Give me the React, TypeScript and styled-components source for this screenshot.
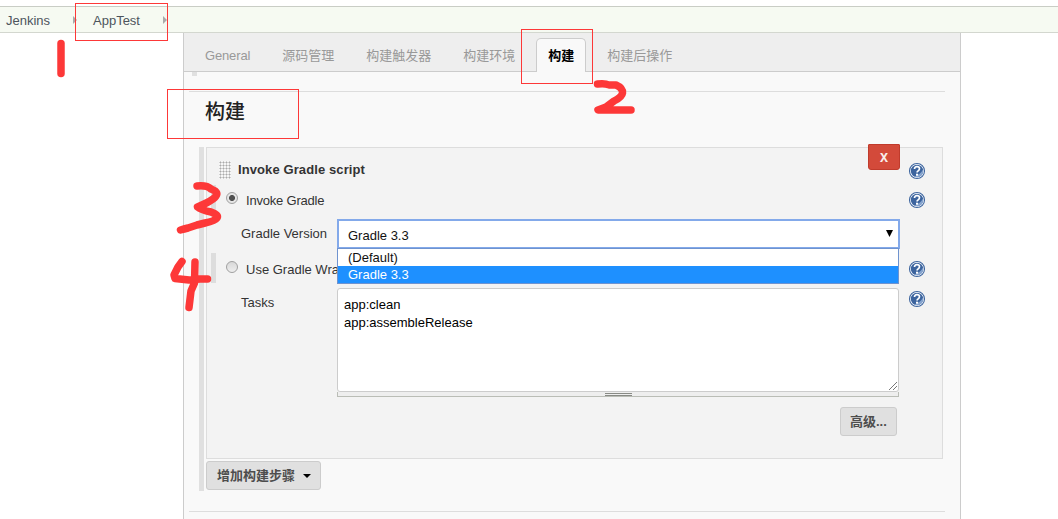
import React from 'react'
import styled, { createGlobalStyle } from 'styled-components'

const GlobalStyle = createGlobalStyle`
  * {
    box-sizing: border-box;
  }
  body {
    margin: 0;
    background: #fff;
    color: #333;
    font: 13px/18px 'Liberation Sans', 'Noto Sans CJK SC', sans-serif;
    overflow: hidden;
  }
`

const Page = styled.div`
  position: relative;
  width: 1058px;
  height: 519px;
  padding-top: 6px;
  overflow: hidden;
`

const Breadcrumbs = styled.nav`
  display: flex;
  align-items: center;
  height: 27px;
  padding-left: 6px;
  background: #f6faf2;
  border-top: 1px solid #c9cdc5;
  border-bottom: 1px solid #d3d7cf;
  color: #4d545d;
`

const Crumb = styled.span<{ $width: number }>`
  width: ${props => props.$width}px;
  padding-top: 2px;
`

const CrumbArrow = styled.span`
  width: 4px;
  height: 8px;
  margin: 1px 16px 0 0;
  background: #aaa;
  clip-path: polygon(0 0, 100% 50%, 0 100%);
`

const ConfigPanel = styled.main`
  width: 778px;
  height: 486px;
  margin-left: 183px;
  background: #f9f9f9;
  border: 1px solid #ccc;
  border-width: 0 1px;
`

const TabBar = styled.div`
  display: flex;
  align-items: flex-end;
  gap: 8px;
  height: 39px;
  padding-left: 9px;
  background: #eee;
  border-bottom: 1px solid #ccc;
`

const Tab = styled.div<{ $active?: boolean }>`
  height: 34px;
  margin-bottom: -1px;
  margin-left: ${props => props.$active ? 1 : 0}px;
  padding: 8px 11px 0;
  border: 1px solid ${props => props.$active ? '#ccc' : 'transparent'};
  border-bottom: 0;
  border-radius: 5px 5px 0 0;
  background: ${props => props.$active ? '#f9f9f9' : 'transparent'};
  color: ${props => props.$active ? '#000' : '#999'};
  font-weight: ${props => props.$active ? 'bold' : 'normal'};
  white-space: nowrap;

  &:first-child {
    letter-spacing: -0.15px;
  }
  &:last-child {
    margin-left: 1px;
  }
`

const ScrollHint = styled.div`
  width: 5px;
  height: 4px;
  margin-left: 8px;
  background: #e0e0e0;
`

const Divider = styled.div<{ $top: number }>`
  width: 756px;
  height: 1px;
  margin: ${props => props.$top}px 0 0 5px;
  background: #ddd;
`

const SectionTitle = styled.h2`
  height: 55px;
  margin: 0;
  padding: 6px 0 0 21px;
  color: #222;
  font-size: 20px;
  font-weight: 500;
  line-height: 28px;
`

const BuildSteps = styled.section`
  width: 744px;
  height: 344px;
  margin-left: 15px;
  padding-left: 2px;
  border-left: 5px solid #e0e0e0;
`

const StepCard = styled.div`
  width: 737px;
  height: 312px;
  background: #f3f3f3;
  border: 1px solid #ddd;
`

const StepHeader = styled.div`
  display: flex;
  height: 37px;
`

const DragHandle = styled.div`
  width: 12px;
  height: 18px;
  margin: 13px 7px 0 12px;
  background: radial-gradient(circle at 1.5px 1.5px, #aaa 0.6px, #fff 1.5px) 0 0 / 3px 3px;
`

const StepName = styled.strong`
  flex: none;
  width: 630px;
  padding-top: 13px;
  letter-spacing: 0.1px;
`

const DeleteButton = styled.button`
  flex: none;
  width: 32px;
  height: 26px;
  margin: -4px -1px 0 0;
  padding: 0;
  background: #d34a3a;
  border: 1px solid #c03b2c;
  border-radius: 1px 1px 3px 3px;
  color: #f8eeec;
  font: bold 12px 'Noto Sans', sans-serif;
`

const Row = styled.div<{ $height: number }>`
  display: flex;
  height: ${props => props.$height}px;
`

const RowMarker = styled.div<{ $height: number }>`
  flex: none;
  width: 5px;
  height: ${props => props.$height}px;
  margin: 0 10px 0 4px;
  background: #ddd;
`

const Radio = styled.span<{ $checked?: boolean }>`
  flex: none;
  width: 12px;
  height: 12px;
  margin: ${props => props.$checked ? 7 : 8}px 8px 0 0;
  border: 1px solid #a0a0a0;
  border-radius: 50%;
  background: ${props => props.$checked
    ? 'radial-gradient(circle, #505050 0 2.6px, #e6e6e6 3.4px)'
    : 'linear-gradient(#d8d8d8, #eee)'};
`

const RadioLabel = styled.span<{ $shift?: number; $spacing?: number }>`
  flex: none;
  width: 653px;
  padding-top: ${props => 7 + (props.$shift || 0)}px;
  letter-spacing: ${props => props.$spacing || 0}px;
`

const FieldLabel = styled.span`
  flex: none;
  width: 130px;
  padding: 6px 0 0 34px;
  white-space: nowrap;
`

const Select = styled.div`
  position: relative;
  display: flex;
  justify-content: space-between;
  width: 563px;
  height: 30px;
  padding: 6px 5px 0 9px;
  background: #fff;
  border: 2px solid #83a9ea;
  color: #111;
`

const SelectArrow = styled.span`
  width: 7px;
  height: 7px;
  margin: 3px 0 0;
  background: #000;
  clip-path: polygon(0 0, 100% 0, 50% 100%);
`

const OptionList = styled.div`
  position: absolute;
  z-index: 2;
  top: 27px;
  left: -2px;
  width: 562px;
  background: #fff;
  border: 1px solid #6f93cf;
`

const Option = styled.div<{ $selected?: boolean }>`
  height: 17px;
  padding-left: 10px;
  background: ${props => props.$selected ? '#1e90ff' : '#fff'};
  color: ${props => props.$selected ? '#fff' : '#111'};
  line-height: 17px;
`

const TaskField = styled.div`
  width: 562px;
`

const TaskText = styled.div`
  display: flex;
  justify-content: space-between;
  height: 104px;
  padding: 7px 1px 1px 6px;
  background: #fff;
  border: 1px solid #ccc;
  border-radius: 3px;
  color: #000;
  white-space: pre;
`

const ResizeCorner = styled.svg`
  align-self: flex-end;
`

const ResizeBar = styled.div`
  display: flex;
  justify-content: center;
  height: 5px;
  padding-top: 1px;
  background: #eee;
  border: 1px solid #babdb6;
  border-top: 0;
`

const ResizeGrip = styled.span`
  width: 27px;
  height: 3px;
  border: 1px solid #888a85;
  border-width: 1px 0;
`

const HelpButton = styled.svg<{ $top?: number }>`
  flex: none;
  margin: ${props => props.$top || 0}px 0 0 9px;
`

const GrayButton = styled.button`
  display: flex;
  align-items: center;
  gap: 8px;
  height: 29px;
  padding: 1px 9px 0 10px;
  background: #e0e0e0;
  border: 1px solid #ccc;
  border-radius: 3px;
  color: #4d4d4d;
  font: bold 13px/18px 'Liberation Sans', 'Noto Sans CJK SC', sans-serif;
`

const MoreButton = styled(GrayButton)`
  width: 57px;
  padding-left: 9px;
`

const ButtonRow = styled.div`
  display: flex;
  justify-content: flex-end;
  padding: 10px 45px 0 0;
`

const AddStep = styled.div`
  display: flex;
  padding-top: 2px;
`

const Caret = styled.span`
  width: 8px;
  height: 4px;
  background: #000;
  clip-path: polygon(0 0, 100% 0, 50% 100%);
`

const Annotations = styled.svg`
  position: absolute;
  z-index: 3;
  top: 0;
  left: 0;
  pointer-events: none;
`

const tabs = ['General', '源码管理', '构建触发器', '构建环境', '构建', '构建后操作']

const Help: React.FC<{ top?: number }> = ({ top }) => (
  <HelpButton $top={top} width='18' height='18' viewBox='0 0 18 18'>
    <circle cx='9' cy='9' r='7.5' fill='#fff' stroke='#3d659f' strokeWidth='1.1' />
    <circle cx='9' cy='9' r='6.2' fill='#3c649e' />
    <path d='M15 7.5a6 6 0 0 1-8.5 7Q12.5 12.5 15 7.5' fill='#86a4cf' />
    <path d='M6.5 7Q6.5 4.7 9 4.7t2.5 2.1Q11.5 8 10 8.9Q9.1 9.4 9.1 10.6' fill='none' stroke='#fff' strokeWidth='1.7' />
    <path d='M8 11.7h2.1v2H8z' fill='#fff' />
  </HelpButton>
)

const App: React.FC = () => (
  <Page>
    <GlobalStyle />
    <Breadcrumbs>
      <Crumb $width={67}>Jenkins</Crumb>
      <CrumbArrow />
      <Crumb $width={70}>AppTest</Crumb>
      <CrumbArrow />
    </Breadcrumbs>
    <ConfigPanel>
      <TabBar>
        {tabs.map(tab => <Tab key={tab} $active={tab === '构建'}>{tab}</Tab>)}
      </TabBar>
      <ScrollHint />
      <Divider $top={15} />
      <SectionTitle>构建</SectionTitle>
      <BuildSteps>
        <StepCard>
          <StepHeader>
            <DragHandle />
            <StepName>Invoke Gradle script</StepName>
            <DeleteButton>X</DeleteButton>
            <Help top={14} />
          </StepHeader>
          <Row $height={34}>
            <RowMarker $height={30} />
            <Radio $checked />
            <RadioLabel $spacing={-0.2}>Invoke Gradle</RadioLabel>
            <Help top={6} />
          </Row>
          <Row $height={34}>
            <FieldLabel>Gradle Version</FieldLabel>
            <Select>
              Gradle 3.3
              <SelectArrow />
              <OptionList>
                <Option>(Default)</Option>
                <Option $selected>Gradle 3.3</Option>
              </OptionList>
            </Select>
          </Row>
          <Row $height={35}>
            <RowMarker $height={30} />
            <Radio />
            <RadioLabel $shift={1}>Use Gradle Wra</RadioLabel>
            <Help top={7} />
          </Row>
          <Row $height={109}>
            <FieldLabel>Tasks</FieldLabel>
            <TaskField>
              <TaskText>
                {'app:clean\napp:assembleRelease'}
                <ResizeCorner width='8' height='8' viewBox='0 0 8 8'>
                  <path d='M0 8L8 0M4 8L8 4' stroke='#777' />
                </ResizeCorner>
              </TaskText>
              <ResizeBar><ResizeGrip /></ResizeBar>
            </TaskField>
            <Help top={2} />
          </Row>
          <ButtonRow>
            <MoreButton>高级...</MoreButton>
          </ButtonRow>
        </StepCard>
        <AddStep>
          <GrayButton>增加构建步骤<Caret /></GrayButton>
        </AddStep>
      </BuildSteps>
      <Divider $top={20} />
    </ConfigPanel>
    <Annotations width='1058' height='519' fill='none' stroke='#fd3838'>
      <rect x='75.5' y='3.5' width='92' height='37' />
      <rect x='521.5' y='29.5' width='71' height='54' />
      <rect x='167.5' y='89.5' width='131' height='49' />
      <g strokeWidth='7.5' strokeLinecap='round' strokeLinejoin='round'>
        <path d='M61 43.5V73.5' />
        <path d='M597.5 84Q605 83 609 85L616 85Q623 88 622.5 93Q622 97 614 101L606 107L598 110H631' />
        <path d='M197 186Q207 185 211 189Q219 192 216 196Q214 200 197.5 207Q201 210 211 212Q219 215 217 218Q215 221 205 223L197 225L188 228Q184 229 180.5 230' />
        <path d='M182 261.5L178 267L174 275L175 278.5L189 280L200 279H207.5M195 262L194.5 283L191 291L189 307.5' />
      </g>
    </Annotations>
  </Page>
)

export default App
